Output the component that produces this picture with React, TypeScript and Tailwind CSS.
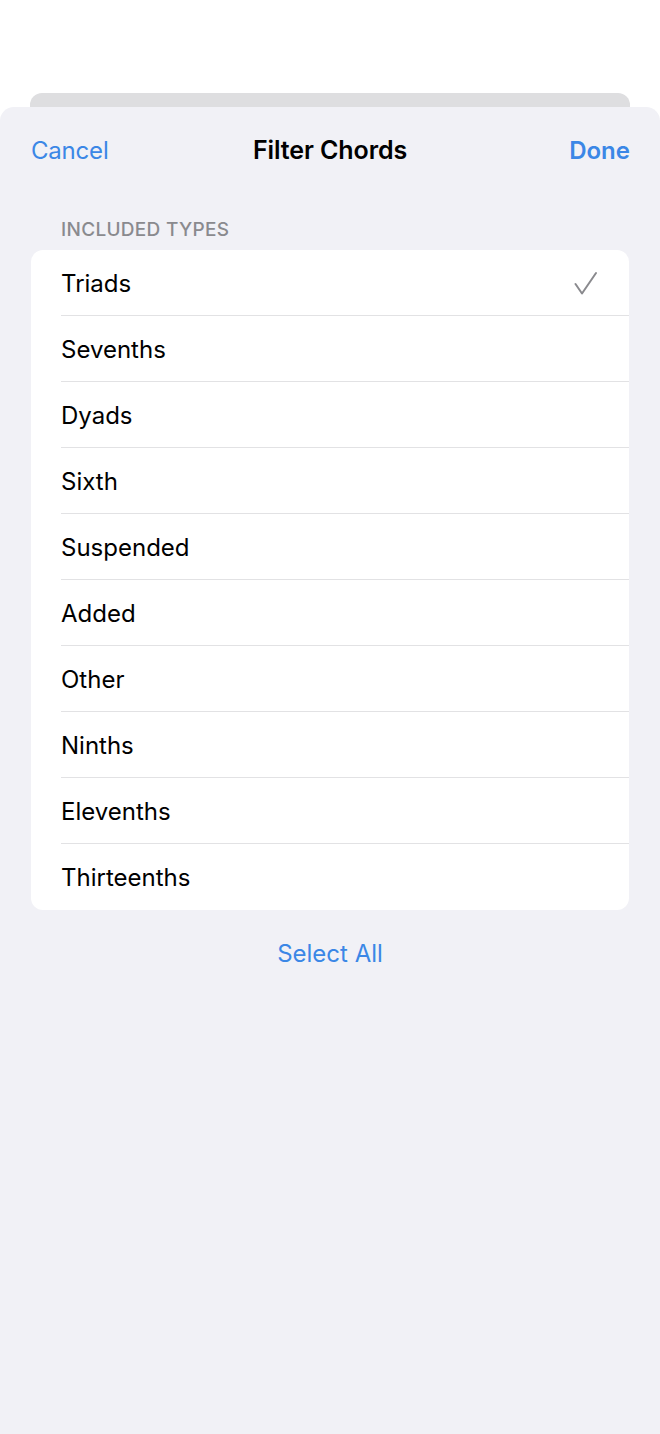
import React, { useState } from 'react';

const TYPES = [
    'Triads',
    'Sevenths',
    'Dyads',
    'Sixth',
    'Suspended',
    'Added',
    'Other',
    'Ninths',
    'Elevenths',
    'Thirteenths',
];

const CheckMark = () => (
    <svg width="26" height="26" viewBox="0 0 26 26" fill="none">
        <path d="M4.5 14 L11 23.5 L25 3" stroke="#8a8a8e" strokeWidth="2" strokeLinecap="round" strokeLinejoin="round" />
    </svg>
);

export default function App() {
    const [selected, setSelected] = useState<string[]>(['Triads']);

    const toggle = (t: string) =>
        setSelected((s) => (s.includes(t) ? s.filter((x) => x !== t) : [...s, t]));

    return (
        <div className="w-[660px] h-[1434px] bg-white flex flex-col overflow-hidden font-['Inter',sans-serif]">
            {/* stacked sheet behind */}
            <div className="h-[93px] shrink-0" />
            <div className="mx-[30px] h-[15px] shrink-0 bg-[#dedee0] rounded-t-[12px]" />

            {/* sheet */}
            <div className="flex-1 bg-[#f1f1f6] rounded-t-[14px] -mt-px flex flex-col">
                {/* Nav */}
                <div className="h-[86px] pl-[31px] pr-[30px] pt-[2px] flex items-center justify-between relative">
                    <button className="text-[24px] text-[#3b87e6] tracking-[-0.2px]">Cancel</button>
                    <span className="absolute left-1/2 -translate-x-1/2 text-[25px] font-semibold text-black tracking-[-0.1px]">
                        Filter Chords
                    </span>
                    <button className="text-[24px] font-semibold text-[#3b87e6] tracking-[0px]">Done</button>
                </div>

                {/* Section */}
                <div className="px-[31px]">
                    <div className="pl-[30px] h-[57px] flex items-center pt-[18px] text-[19px] font-medium text-[#8a8a8e] uppercase tracking-[0.3px]">
                        Included Types
                    </div>
                    <div className="bg-white rounded-[12px] overflow-hidden">
                        {TYPES.map((t, i) => (
                            <div
                                key={t}
                                onClick={() => toggle(t)}
                                className="pl-[30px] cursor-pointer"
                            >
                                <div
                                    className={`h-[66px] flex items-center justify-between pr-[32px] ${i < TYPES.length - 1 ? 'border-b border-[#e2e2e4]' : ''}`}
                                >
                                    <span className="text-[24px] text-black tracking-[0px] pt-[2px]">{t}</span>
                                    {selected.includes(t) && <CheckMark />}
                                </div>
                            </div>
                        ))}
                    </div>
                </div>

                <div className="flex justify-center mt-[26px]">
                    <button className="text-[24px] text-[#3b87e6] tracking-[0px]">Select All</button>
                </div>
            </div>
        </div>
    );
}
